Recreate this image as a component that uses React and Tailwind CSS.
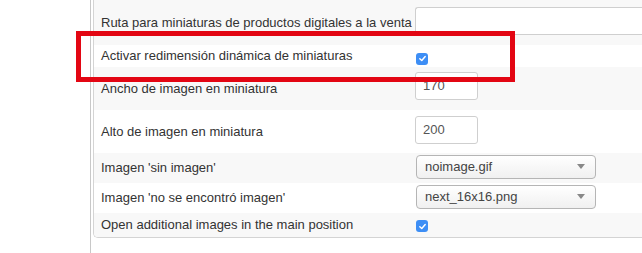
const Check = () => (
  <span className="flex h-[12px] w-[12px] items-center justify-center rounded-[3px] bg-[#3d8ef5]">
    <svg width="9" height="9" viewBox="0 0 10 10" fill="none">
      <path d="M2 5.2 L4.2 7.3 L8 2.8" stroke="white" strokeWidth="1.6" strokeLinecap="round" strokeLinejoin="round" />
    </svg>
  </span>
);

const Select = ({ value, className = "" }) => (
  <div
    className={`flex h-[24px] w-[180px] items-center justify-between rounded-[4px] border border-[#b5b5b5] bg-gradient-to-b from-white to-[#f0f0f0] pl-[8px] pr-[10px] text-[13px] text-[#444] ${className}`}
  >
    <span>{value}</span>
    <svg width="8" height="5" viewBox="0 0 8 5">
      <path d="M0 0 H8 L4 5 Z" fill="#888" />
    </svg>
  </div>
);

const rows = [
  { label: "Ruta para miniaturas de productos digitales a la venta", h: "h-[45px]", bg: "bg-[#f8f8f8]", kind: "wide" },
  { label: "Activar redimensión dinámica de miniaturas", h: "h-[22px]", bg: "bg-white", kind: "check", shift: "mt-[5px]" },
  { label: "Ancho de imagen en miniatura", h: "h-[43px]", bg: "bg-[#f8f8f8]", kind: "num", value: "170", shift: "-mt-[6px]" },
  { label: "Alto de imagen en miniatura", h: "h-[43px]", bg: "bg-white", kind: "num", value: "200", shift: "-mt-[3px]" },
  { label: "Imagen 'sin imagen'", h: "h-[30px]", bg: "bg-[#f8f8f8]", kind: "select", value: "noimage.gif", shift: "-mt-[3px]" },
  { label: "Imagen 'no se encontró imagen'", h: "h-[30px]", bg: "bg-white", kind: "select", value: "next_16x16.png", shift: "-mt-[3px]" },
  { label: "Open additional images in the main position", h: "h-[24px]", bg: "bg-[#f8f8f8]", kind: "check", shift: "mt-[2px]" },
];

export default function App() {
  return (
    <div className="relative h-[253px] w-[642px] overflow-hidden bg-white font-['Liberation_Sans',Arial,sans-serif]">
      <div className="ml-[90px] h-full border-l border-[#c8c8c8] pl-[2px]">
        <div className="overflow-hidden rounded-bl-[5px] border-b border-l border-[#d4d4d4]">
          {rows.map((r) => (
            <div key={r.label} className={`flex items-center ${r.h} ${r.bg}`}>
              <div className="w-[321px] shrink-0 pl-[7px] text-[13px] text-[#333]">{r.label}</div>
              {r.kind === "wide" && (
                <div className="-mt-[3px] h-[28px] flex-1 rounded-l-[3px] border border-r-0 border-[#cfcfcf] bg-white" />
              )}
              {r.kind === "check" && (
                <div className={`pl-[1px] ${r.shift}`}>
                  <Check />
                </div>
              )}
              {r.kind === "num" && (
                <div
                  className={`flex h-[28px] w-[63px] items-center rounded-[3px] border border-[#cfcfcf] bg-white pl-[7px] text-[13px] text-[#555] ${r.shift}`}
                >
                  {r.value}
                </div>
              )}
              {r.kind === "select" && <Select value={r.value} className={`ml-[1px] ${r.shift}`} />}
            </div>
          ))}
        </div>
      </div>
      <div className="absolute left-[76px] top-[31px] h-[51px] w-[439px] border-[5px] border-[#e30613]" />
    </div>
  );
}
